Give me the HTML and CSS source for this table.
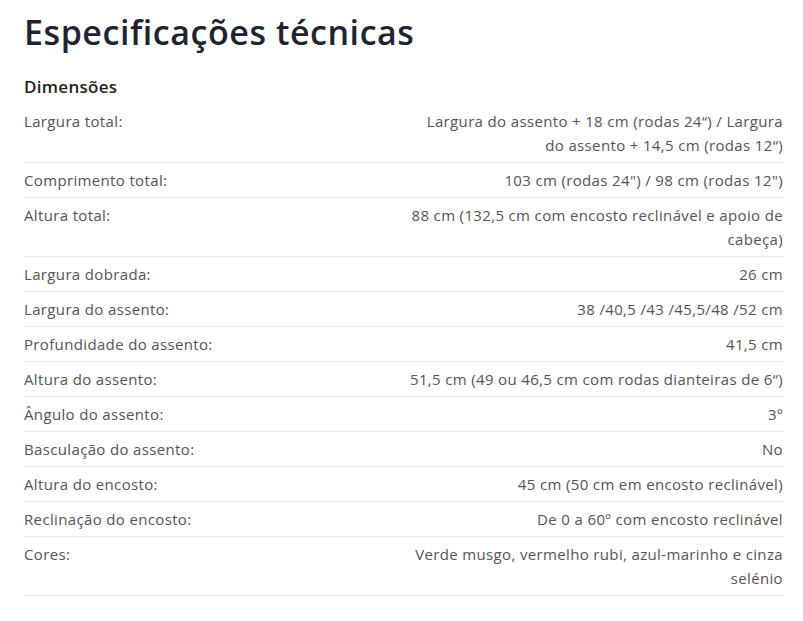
FILE: index.html
```html
<!DOCTYPE html>
<html lang="pt">
<head>
<meta charset="utf-8">
<title>Especificações técnicas</title>
<link rel="stylesheet" href="styles.css">
</head>
<body>
<main class="specs">
  <h1 class="specs-title">Especificações técnicas</h1>
  <h2 class="specs-group">Dimensões</h2>
  <table class="specs-table">
    <tbody>
      <tr><td class="label">Largura total:</td><td class="value">Largura do assento + 18 cm (rodas 24“) / Largura do&nbsp;assento + 14,5 cm (rodas 12“)</td></tr>
      <tr><td class="label">Comprimento total:</td><td class="value">103 cm (rodas 24") / 98 cm (rodas 12")</td></tr>
      <tr><td class="label">Altura total:</td><td class="value">88 cm (132,5 cm com encosto reclinável e apoio de cabeça)</td></tr>
      <tr><td class="label">Largura dobrada:</td><td class="value">26 cm</td></tr>
      <tr><td class="label">Largura do assento:</td><td class="value">38 /40,5 /43 /45,5/48 /52 cm</td></tr>
      <tr><td class="label">Profundidade do assento:</td><td class="value">41,5 cm</td></tr>
      <tr><td class="label">Altura do assento:</td><td class="value">51,5 cm (49 ou 46,5 cm com rodas dianteiras de 6“)</td></tr>
      <tr><td class="label">Ângulo do assento:</td><td class="value">3º</td></tr>
      <tr><td class="label">Basculação do assento:</td><td class="value">No</td></tr>
      <tr><td class="label">Altura do encosto:</td><td class="value">45 cm (50 cm em encosto reclinável)</td></tr>
      <tr><td class="label">Reclinação do encosto:</td><td class="value">De 0 a 60º com encosto reclinável</td></tr>
      <tr><td class="label">Cores:</td><td class="value">Verde musgo, vermelho rubi, azul-marinho e cinza selénio</td></tr>
    </tbody>
  </table>
</main>
</body>
</html>
```
FILE: styles.css
```css
html, body {
  margin: 0;
  padding: 0;
  background: #ffffff;
}

.specs {
  padding: 10px 20px 0 24px;
  font-family: "Open Sans", "Noto Sans", sans-serif;
  color: #555555;
}

.specs-title {
  margin: 0;
  font-family: "Open Sans", "Noto Sans", sans-serif;
  font-weight: 600;
  font-size: 34px;
  line-height: 44px;
  color: #1e2531;
  letter-spacing: 0.55px;
}

.specs-group {
  margin: 21px 0 0;
  font-family: "Open Sans", "Noto Sans", sans-serif;
  font-size: 17px;
  font-weight: 600;
  line-height: 24px;
  color: #222222;
  letter-spacing: 0.3px;
}

.specs-table {
  width: 100%;
  border-collapse: collapse;
  margin-top: 5px;
  font-size: 15px;
  line-height: 24px;
  letter-spacing: 0.35px;
}

.specs-table td {
  padding: 5px 0;
  vertical-align: top;
  border-bottom: 1px solid #e9e9e9;
  width: 50%;
}

.specs-table .value {
  text-align: right;
}
```
